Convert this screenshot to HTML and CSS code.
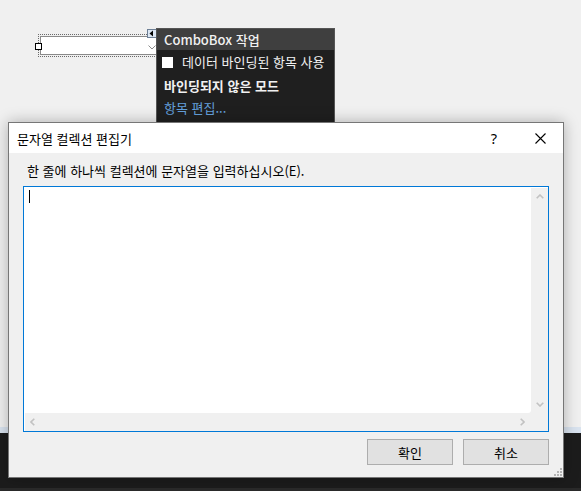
FILE: index.html
```html
<!DOCTYPE html>
<html lang="ko">
<head>
<meta charset="utf-8">
<title>문자열 컬렉션 편집기</title>
<link rel="stylesheet" href="styles.css">
</head>
<body>
<div class="desk">
  <div class="fill"></div>
  <div class="strip"></div>
  <div class="dark"></div>
  <div class="darkline"></div>

  <div class="combo-sel">
    <div class="combo">
      <svg class="combo-chev" width="8" height="5" viewBox="0 0 8 5"><path d="M0.5 0.5 L4 4 L7.5 0.5" fill="none" stroke="#8c8c8c" stroke-width="1"/></svg>
    </div>
    <span class="handle"></span>
    <span class="smarttag"><svg width="8" height="7" viewBox="0 0 8 7"><path d="M1.5 3.5 L5 0.5 L5 6.5 Z" fill="#000"/></svg></span>
  </div>

  <div class="tasks">
    <div class="tasks-head">ComboBox 작업</div>
    <div class="tasks-body">
      <div class="tasks-row"><span class="check"></span><span>데이터 바인딩된 항목 사용</span></div>
      <div class="tasks-row bold">바인딩되지 않은 모드</div>
      <div class="tasks-row link">항목 편집...</div>
    </div>
  </div>

  <div class="dialog">
    <div class="titlebar">
      <span class="title">문자열 컬렉션 편집기</span>
      <span class="tb-btn help">?</span>
      <span class="tb-btn close"><svg width="11" height="11" viewBox="0 0 11 11"><path d="M0.5 0.5 L10.5 10.5 M10.5 0.5 L0.5 10.5" stroke="#000" stroke-width="1.1" fill="none"/></svg></span>
    </div>
    <div class="dlg-body">
      <div class="label">한 줄에 하나씩 컬렉션에 문자열을 입력하십시오(E).</div>
      <div class="editor">
        <div class="content"><span class="caret"></span></div>
        <div class="vscroll">
          <svg width="8" height="5" viewBox="0 0 8 5"><path d="M0.7 4.3 L4 1 L7.3 4.3" fill="none" stroke="#c2c2c2" stroke-width="1.6"/></svg>
          <svg width="8" height="5" viewBox="0 0 8 5"><path d="M0.7 0.7 L4 4 L7.3 0.7" fill="none" stroke="#c2c2c2" stroke-width="1.6"/></svg>
        </div>
        <div class="hscroll">
          <svg width="5" height="8" viewBox="0 0 5 8"><path d="M4.3 0.7 L1 4 L4.3 7.3" fill="none" stroke="#c2c2c2" stroke-width="1.6"/></svg>
          <svg width="5" height="8" viewBox="0 0 5 8"><path d="M0.7 0.7 L4 4 L0.7 7.3" fill="none" stroke="#c2c2c2" stroke-width="1.6"/></svg>
        </div>
        <div class="corner"></div>
      </div>
      <div class="buttons">
        <button class="btn">확인</button>
        <button class="btn">취소</button>
      </div>
    </div>
    <svg class="grip" width="8" height="8" viewBox="0 0 8 8">
      <rect x="6" y="0" width="2" height="2" fill="#b4b4b4"/>
      <rect x="3" y="3" width="2" height="2" fill="#b4b4b4"/>
      <rect x="6" y="3" width="2" height="2" fill="#b4b4b4"/>
      <rect x="0" y="6" width="2" height="2" fill="#b4b4b4"/>
      <rect x="3" y="6" width="2" height="2" fill="#b4b4b4"/>
      <rect x="6" y="6" width="2" height="2" fill="#b4b4b4"/>
    </svg>
  </div>
</div>
</body>
</html>
```

FILE: styles.css
```css
html, body {
  margin: 0;
  padding: 0;
}
body {
  font-family: "Noto Sans CJK KR", "Noto Sans", sans-serif;
  font-size: 13px;
  color: #000;
}
.desk {
  position: relative;
  width: 581px;
  height: 491px;
  overflow: hidden;
  background: #f0f0f0;
  display: flex;
  flex-direction: column;
}
.fill { flex: 1; }
.strip { height: 6px; background: #d9e3ef; }
.dark { height: 55px; background: #1c1c1c; }
.darkline { height: 3px; background: #2a2a2a; }

/* designer combobox */
.combo-sel {
  position: absolute;
  left: 38px;
  top: 34px;
  width: 125px;
  height: 23px;
  box-sizing: border-box;
  border: 1px dotted #6a6a6a;
  padding: 1px;
}
.combo {
  position: relative;
  height: 19px;
  box-sizing: border-box;
  border: 1px solid #8a8a8a;
  background: #fff;
}
.combo-chev {
  position: absolute;
  left: 107px;
  top: 8px;
}
.handle {
  position: absolute;
  left: -4px;
  top: 8px;
  width: 7px;
  height: 7px;
  box-sizing: border-box;
  border: 1px solid #000;
  background: #fff;
}
.smarttag {
  position: absolute;
  left: 108px;
  top: -6px;
  width: 10px;
  height: 9px;
  box-sizing: border-box;
  border: 1px solid #6d7f95;
  background: #dbe6f3;
  display: flex;
  align-items: center;
  justify-content: center;
}
.smarttag svg { display: block; }

/* smart tag panel */
.tasks {
  position: absolute;
  left: 156px;
  top: 28px;
  width: 179px;
  height: 100px;
  box-sizing: border-box;
  border: 1px solid #555555;
  background: #1f1f1f;
  color: #f1f1f1;
}
.tasks-head {
  height: 21px;
  line-height: 21px;
  background: #3f3f3f;
  padding-left: 7px;
  font-weight: 500;
}
.tasks-body {
  padding: 4px 0 0 5px;
}
.tasks-row {
  height: 16px;
  line-height: 16px;
  display: flex;
  align-items: center;
  gap: 9px;
  padding-left: 2px;
  white-space: nowrap;
}
.tasks-row.bold {
  font-weight: 700;
  margin-top: 8px;
}
.tasks-row.link {
  color: #64a0dc;
  margin-top: 6px;
}
.check {
  width: 11px;
  height: 11px;
  background: #fff;
  flex: none;
  margin-left: -2px;
}

/* dialog */
.dialog {
  position: absolute;
  left: 8px;
  top: 122px;
  width: 556px;
  height: 356px;
  box-sizing: border-box;
  border: 1px solid #767676;
  background: #f0f0f0;
  box-shadow: 0 0 14px rgba(0, 0, 0, 0.28);
  display: flex;
  flex-direction: column;
}
.titlebar {
  height: 30px;
  background: #fff;
  display: flex;
  align-items: center;
  padding-left: 8px;
}
.title {
  flex: 1;
  white-space: nowrap;
}
.tb-btn {
  width: 46px;
  height: 30px;
  display: flex;
  align-items: center;
  justify-content: center;
}
.help {
  font-family: "Noto Sans", sans-serif;
  font-size: 14.5px;
}
.close svg { display: block; }

.dlg-body {
  flex: 1;
  padding: 10px 14px 0;
}
.label {
  height: 16px;
  line-height: 16px;
  padding-left: 4px;
  white-space: nowrap;
}
.editor {
  margin-top: 7px;
  height: 246px;
  box-sizing: border-box;
  border: 1px solid #0078d7;
  padding: 1px 0 0 1px;
  background: #f0f0f0;
  display: grid;
  grid-template-columns: 1fr 17px;
  grid-template-rows: 1fr 18px;
  box-shadow: inset 1px 1px 0 #fff;
}
.content {
  background: #fff;
  border-bottom-right-radius: 3px;
  position: relative;
}
.caret {
  display: block;
  width: 1px;
  height: 13px;
  background: #000;
  margin: 2px 0 0 4px;
}
.vscroll {
  display: flex;
  flex-direction: column;
  justify-content: space-between;
  align-items: center;
  padding: 6px 0;
}
.vscroll svg, .hscroll svg { display: block; }
.hscroll {
  display: flex;
  justify-content: space-between;
  align-items: center;
  padding: 0 6px 0 5px;
}
.buttons {
  margin-top: 7px;
  display: flex;
  justify-content: flex-end;
  gap: 10px;
}
.btn {
  width: 86px;
  height: 26px;
  box-sizing: border-box;
  border: 1px solid #adadad;
  background: #e1e1e1;
  font-family: "Noto Sans CJK KR", "Noto Sans", sans-serif;
  font-size: 13px;
  color: #000;
  padding: 0;
  margin: 0;
}
.grip {
  position: absolute;
  right: 1px;
  bottom: 1px;
}
```
